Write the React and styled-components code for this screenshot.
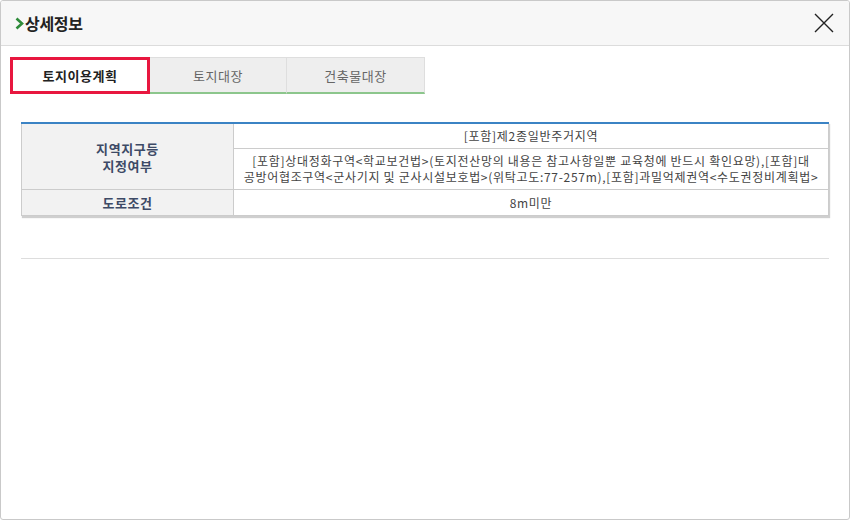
import styled, { createGlobalStyle } from "styled-components";

const GlobalStyle = createGlobalStyle`
    html, body {
        margin: 0;
        padding: 0;
        background: #fff;
    }
    body {
        font-family: "Noto Sans CJK KR", "Noto Sans", sans-serif;
        color: #333;
    }
`;

const Dialog = styled.div`
    box-sizing: border-box;
    width: 850px;
    height: 520px;
    border: 1px solid #c9c9c9;
    border-radius: 3px;
    background: #fff;
    overflow: hidden;
`;

const Header = styled.header`
    display: flex;
    align-items: center;
    justify-content: space-between;
    height: 44px;
    padding: 0 10px 0 14px;
    background: #f7f7f7;
    border-bottom: 1px solid #dcdcdc;
`;

const Title = styled.h1`
    display: flex;
    align-items: center;
    gap: 1px;
    margin: 0;
    font-size: 16px;
    font-weight: 700;
    color: #222;
    letter-spacing: -0.3px;
`;

const CloseButton = styled.button`
    display: flex;
    align-items: center;
    justify-content: center;
    width: 30px;
    height: 30px;
    padding: 0;
    border: 0;
    background: transparent;
    cursor: pointer;
`;

const Body = styled.div`
    padding: 11px 9px 0;
`;

const Tabs = styled.ul`
    display: flex;
    margin: 0;
    padding: 0;
    list-style: none;
`;

const Tab = styled.li`
    box-sizing: border-box;
    display: flex;
    align-items: center;
    justify-content: center;
    width: ${(p) => p.$width}px;
    height: 37px;
    font-size: 13px;
    font-weight: ${(p) => (p.$active ? 700 : 400)};
    color: ${(p) => (p.$active ? "#222" : "#666")};
    background: ${(p) => (p.$active ? "#fff" : "#eeeeee")};
    border: ${(p) => (p.$active ? "3px solid #e8173f" : "1px solid #dedede")};
    border-bottom: ${(p) => (p.$active ? "3px solid #e8173f" : "2px solid #8cc68c")};
    border-left-width: ${(p) => (p.$first || p.$active ? undefined : "0")};
    letter-spacing: 0.5px;
    cursor: pointer;
`;

const Table = styled.table`
    width: 808px;
    margin: 28px 0 0 11px;
    border-collapse: collapse;
    border-top: 2px solid #3b83c4;
    box-shadow: 1px 2px 1px #cfcfcf;
    font-size: 12px;
`;

const Th = styled.th`
    width: 195px;
    padding: 4px 8px;
    background: #f2f2f2;
    border: 1px solid #cccccc;
    color: #3d4a66;
    font-size: 13px;
    font-weight: 700;
    line-height: 17px;
    letter-spacing: 0.6px;
`;

const Td = styled.td`
    padding: 4px 6px;
    border: 1px solid #cccccc;
    text-align: center;
    color: #444;
    line-height: 16px;
    letter-spacing: 0.7px;
    white-space: nowrap;
`;

const Divider = styled.hr`
    width: 808px;
    margin: 42px 0 0 11px;
    border: 0;
    border-top: 1px solid #dddddd;
`;

const tabs = [
    { label: "토지이용계획", width: 140, active: true },
    { label: "토지대장", width: 137 },
    { label: "건축물대장", width: 138 },
];

export default function App() {
    return (
        <>
            <GlobalStyle />
            <Dialog>
                <Header>
                    <Title>
                        <svg width="9" height="13" viewBox="0 0 9 13">
                            <polyline points="1.5,1.5 7,6.5 1.5,11.5" fill="none" stroke="#2e8b3a" strokeWidth="2.6" />
                        </svg>
                        상세정보
                    </Title>
                    <CloseButton aria-label="닫기">
                        <svg width="22" height="22" viewBox="0 0 22 22">
                            <path d="M2 2 L20 20 M20 2 L2 20" stroke="#222" strokeWidth="1.4" fill="none" />
                        </svg>
                    </CloseButton>
                </Header>
                <Body>
                    <Tabs>
                        {tabs.map((t, i) => (
                            <Tab key={t.label} $width={t.width} $active={t.active} $first={i === 0}>
                                {t.label}
                            </Tab>
                        ))}
                    </Tabs>
                    <Table>
                        <tbody>
                            <tr>
                                <Th rowSpan={2}>
                                    지역지구등
                                    <br />
                                    지정여부
                                </Th>
                                <Td>[포함]제2종일반주거지역</Td>
                            </tr>
                            <tr>
                                <Td>
                                    [포함]상대정화구역&lt;학교보건법&gt;(토지전산망의 내용은 참고사항일뿐 교육청에 반드시 확인요망),[포함]대
                                    <br />
                                    공방어협조구역&lt;군사기지 및 군사시설보호법&gt;(위탁고도:77-257m),[포함]과밀억제권역&lt;수도권정비계획법&gt;
                                </Td>
                            </tr>
                            <tr>
                                <Th>도로조건</Th>
                                <Td>8m미만</Td>
                            </tr>
                        </tbody>
                    </Table>
                    <Divider />
                </Body>
            </Dialog>
        </>
    );
}
